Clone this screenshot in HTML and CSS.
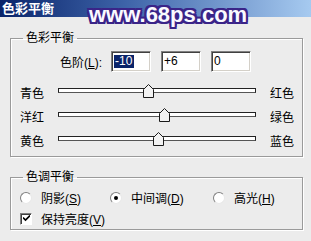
FILE: index.html
```html
<!DOCTYPE html>
<html lang="zh">
  <head>
    <meta charset="UTF-8" />
    <title>色彩平衡</title>
    <link rel="stylesheet" href="styles.css">
  </head>
  <body>
    <div class="window">
      <div class="titlebar">色彩平衡</div>
      <div class="watermark">www.68ps.com</div>

      <div class="panel">
        <fieldset class="group group--balance">
          <legend>色彩平衡</legend>
          <div class="levels">
            <label class="levels__label">色阶(<u>L</u>):</label>
            <span class="field"><span class="field__sel">-10</span></span>
            <span class="field">+6</span>
            <span class="field">0</span>
          </div>

          <div class="slider">
            <span>青色</span>
            <div class="slider__track">
              <svg class="slider__thumb" style="left: 84px" width="11" height="14" viewBox="0 0 11 14">
                <polygon points="0.5,5.5 5.5,0.5 10.5,5.5 10.5,13.5 0.5,13.5" />
              </svg>
            </div>
            <span class="slider__end">红色</span>
          </div>
          <div class="slider">
            <span>洋红</span>
            <div class="slider__track">
              <svg class="slider__thumb" style="left: 100px" width="11" height="14" viewBox="0 0 11 14">
                <polygon points="0.5,5.5 5.5,0.5 10.5,5.5 10.5,13.5 0.5,13.5" />
              </svg>
            </div>
            <span class="slider__end">绿色</span>
          </div>
          <div class="slider">
            <span>黄色</span>
            <div class="slider__track">
              <svg class="slider__thumb" style="left: 94px" width="11" height="14" viewBox="0 0 11 14">
                <polygon points="0.5,5.5 5.5,0.5 10.5,5.5 10.5,13.5 0.5,13.5" />
              </svg>
            </div>
            <span class="slider__end">蓝色</span>
          </div>
        </fieldset>

        <fieldset class="group group--tone">
          <legend>色调平衡</legend>
          <div class="tones">
            <label class="opt"><span class="radio"></span><span>阴影(<u>S</u>)</span></label>
            <label class="opt"><span class="radio radio--on"></span><span>中间调(<u>D</u>)</span></label>
            <label class="opt"><span class="radio"></span><span>高光(<u>H</u>)</span></label>
          </div>
          <label class="opt">
            <span class="check">
              <svg width="7" height="7" viewBox="0 0 7 7">
                <path d="M0 2.5 L2.5 5 L7 0.5" fill="none" stroke="#000" stroke-width="1.6" />
              </svg>
            </span>
            <span>保持亮度(<u>V</u>)</span>
          </label>
        </fieldset>
      </div>
    </div>
  </body>
</html>
```

FILE: styles.css
```css
* {
  margin: 0;
  padding: 0;
  box-sizing: border-box;
}
html,
body {
  background-color: #ececec;
}
body {
  font-family: "Liberation Sans", "Noto Sans CJK SC", sans-serif;
  font-size: 12px;
  color: #000;
}
.window {
  position: relative;
  width: 311px;
  height: 241px;
}

.titlebar {
  height: 17px;
  padding-left: 2px;
  line-height: 17px;
  font-size: 13px;
  font-weight: bold;
  color: #fff;
  background: linear-gradient(to right, #0a246a 0%, #3d63a8 40%, #a6caf0 100%);
}

.watermark {
  position: absolute;
  top: 3px;
  left: 89px;
  font-size: 22px;
  font-weight: bold;
  line-height: 24px;
  color: #fafaff;
  text-shadow:
    2px 0 0 #3a2488, -2px 0 0 #3a2488, 0 2px 0 #3a2488, 0 -2px 0 #3a2488,
    2px 2px 0 #3a2488, -2px -2px 0 #3a2488, 2px -2px 0 #3a2488, -2px 2px 0 #3a2488,
    0 0 2px #3a2488;
}

.panel {
  display: flex;
  flex-direction: column;
  gap: 13px;
  padding: 14px 0 0 10px;
}

.group {
  width: 293px;
  border: 1px solid #9a9a9a;
  box-shadow: 1px 1px 0 #fff, inset 1px 1px 0 #fff;
  padding: 0 0 0 9px;
}
.group legend {
  margin-left: 3px;
  padding: 0 3px;
  height: 14px;
  line-height: 14px;
}
.group--balance {
  padding-top: 6px;
  padding-bottom: 4px;
}
.group--tone {
  padding-top: 3px;
}

.levels {
  display: flex;
  align-items: center;
  gap: 10px;
  height: 21px;
  margin-bottom: 8px;
  padding-left: 40px;
}
.levels__label {
  width: 43px;
  margin-right: -2px;
  white-space: nowrap;
}
.field {
  width: 40px;
  height: 21px;
  padding: 3px 0 0 2px;
  line-height: 13px;
  background-color: #fff;
  border: 1px solid;
  border-color: #808080 #fff #fff #808080;
  box-shadow: inset 1px 1px 0 #404040, inset -1px -1px 0 #d4d0c8;
}
.field__sel {
  display: inline-block;
  padding: 0 2px 0 1px;
  background-color: #0a246a;
  color: #fff;
}

.slider {
  display: grid;
  grid-template-columns: 38px 198px auto;
  align-items: center;
  height: 24px;
}
.slider__end {
  padding-left: 14px;
  white-space: nowrap;
}
.slider__track {
  position: relative;
  height: 5px;
  margin-top: -3px;
  background-color: #fff;
  border: 1px solid #222;
  border-bottom-color: #555;
}
.slider__thumb {
  position: absolute;
  top: -5px;
  display: block;
}
.slider__thumb polygon {
  fill: #f2f2f2;
  stroke: #1a1a1a;
  stroke-width: 1;
}

.tones {
  display: grid;
  grid-template-columns: 90px 103px auto;
}
.opt {
  display: flex;
  align-items: center;
  gap: 6px;
  height: 21px;
  white-space: nowrap;
}
.radio {
  position: relative;
  width: 12px;
  height: 12px;
  margin-right: 3px;
  border-radius: 50%;
  background-color: #fff;
  border: 1px solid;
  border-color: #808080 #e8e8e8 #e8e8e8 #808080;
}
.radio--on::after {
  content: "";
  position: absolute;
  top: 3px;
  left: 3px;
  width: 4px;
  height: 4px;
  border-radius: 50%;
  background-color: #000;
}
.check {
  display: flex;
  align-items: center;
  justify-content: center;
  width: 12px;
  height: 12px;
  margin-right: 3px;
  background-color: #fff;
  border: 1px solid;
  border-color: #808080 #fff #fff #808080;
  box-shadow: inset 1px 1px 0 #404040;
}
```
